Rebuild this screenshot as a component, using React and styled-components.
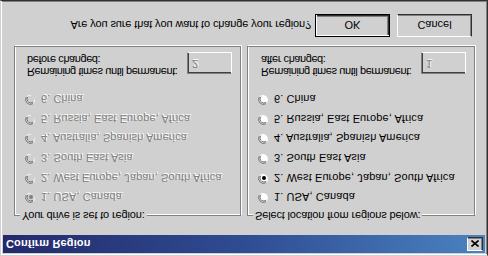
import React from "react";
import styled, { createGlobalStyle, css } from "styled-components";

const Global = createGlobalStyle`
  html, body { margin: 0; padding: 0; background: #d0d0d0; }
  body { font-family: "Liberation Sans", Arial, sans-serif; }
`;

const Window = styled.div`
  width: 488px;
  height: 256px;
  box-sizing: border-box;
  transform: scaleY(-1);
  background: #d0d0d0;
  border: 1px solid;
  border-color: #d0d0d0 #303030 #303030 #d0d0d0;
  box-shadow: inset 1px 1px 0 #ffffff, inset -1px -1px 0 #808080;
  padding: 2px;
  display: flex;
  flex-direction: column;
  font-family: "Liberation Sans", Arial, sans-serif;
  font-size: 11px;
  color: #000;
`;

const TitleBar = styled.div`
  height: 18px;
  flex: none;
  display: flex;
  align-items: center;
  justify-content: space-between;
  padding: 0 2px 0 3px;
  background: linear-gradient(to right, #232a6c 0%, #2f4c92 50%, #4a82c2 100%);
`;

const Title = styled.span`
  color: #fff;
  font-weight: bold;
  font-size: 11px;
  letter-spacing: 0.15px;
`;

const CloseButton = styled.div`
  width: 16px;
  height: 14px;
  box-sizing: border-box;
  background: #d0d0d0;
  border: 1px solid;
  border-color: #fff #303030 #303030 #fff;
  box-shadow: inset -1px -1px 0 #808080;
  display: flex;
  align-items: center;
  justify-content: center;
`;

const Body = styled.div`
  flex: 1;
  display: flex;
  flex-direction: column;
  padding: 19px 10px 0 11px;
`;

const Groups = styled.div`
  display: flex;
  gap: 6px;
`;

const Group = styled.div`
  position: relative;
  width: ${(p) => p.$w}px;
  height: 170px;
  box-sizing: border-box;
  border: 1px solid #808080;
  box-shadow: inset 1px 1px 0 #fff, 1px 1px 0 #fff;
  padding: 8px 8px 0 10px;
  display: flex;
  flex-direction: column;
`;

const Legend = styled.span`
  position: absolute;
  top: -7px;
  left: 5px;
  padding: 0 2px;
  line-height: 13px;
  white-space: nowrap;
  letter-spacing: -0.15px;
  background: #d0d0d0;
`;

const RadioList = styled.div`
  display: flex;
  flex-direction: column;
`;

const disabledText = css`
  color: #808080;
  text-shadow: 1px 1px 0 #fff;
`;

const RadioRow = styled.div`
  height: 19.6px;
  display: flex;
  align-items: center;
  gap: 4px;
  white-space: nowrap;
  letter-spacing: 0.1px;
  span {
    ${(p) => (p.$disabled ? disabledText : "")}
  }
`;

const Bottom = styled.div`
  margin-top: 11px;
  display: flex;
  justify-content: space-between;
  align-items: flex-start;
`;

const Labels = styled.div`
  display: flex;
  flex-direction: column;
  padding-left: ${(p) => p.$pad}px;
  line-height: 12px;
  white-space: nowrap;
  letter-spacing: -0.42px;
`;

const Edit = styled.div`
  flex: none;
  margin-top: 4px;
  width: 45px;
  height: 22px;
  box-sizing: border-box;
  background: #d0d0d0;
  border: 1px solid;
  border-color: #808080 #fff #fff #808080;
  box-shadow: inset 1px 1px 0 #404040, inset -1px -1px 0 #d0d0d0;
  padding: 3px 0 0 4px;
  line-height: 12px;
  ${disabledText}
`;

const ActionRow = styled.div`
  margin-top: 9px;
  display: flex;
  align-items: center;
  justify-content: flex-end;
  padding-right: 3px;
`;

const Question = styled.span`
  margin-right: 4px;
  white-space: nowrap;
  letter-spacing: -0.12px;
`;

const Button = styled.button`
  width: 75px;
  height: 23px;
  box-sizing: border-box;
  margin-left: ${(p) => (p.$first ? 0 : 7)}px;
  padding: 0;
  font-family: inherit;
  font-size: 11px;
  color: #000;
  background: #d0d0d0;
  ${(p) =>
    p.$default
      ? css`
          border: 1px solid #000;
          box-shadow: inset 1px 1px 0 #fff, inset -1px -1px 0 #303030,
            inset -2px -2px 0 #808080;
        `
      : css`
          border: 1px solid;
          border-color: #fff #303030 #303030 #fff;
          box-shadow: inset -1px -1px 0 #808080;
        `}
`;

function Radio({ checked, disabled }) {
  const fill = disabled ? "#d0d0d0" : "#ffffff";
  const dot = disabled ? "#808080" : "#000000";
  return (
    <svg width="12" height="12" viewBox="0 0 12 12" style={{ flex: "none" }}>
      <path d="M1.5 8.5 A5 5 0 0 1 8.5 1.5" stroke="#808080" strokeWidth="1" fill="none" />
      <path d="M8.5 1.5 A5 5 0 0 1 1.5 8.5" stroke="#ffffff" strokeWidth="1" fill="none" />
      <path d="M2.6 8 A4 4 0 0 1 8 2.6" stroke="#404040" strokeWidth="1" fill="none" />
      <path d="M8 2.6 A4 4 0 0 1 2.6 8" stroke="#d0d0d0" strokeWidth="1" fill="none" />
      <circle cx="6" cy="6" r="3.5" fill={fill} />
      {checked && <circle cx="6" cy="6" r="2" fill={dot} />}
    </svg>
  );
}

const regions = [
  "1. USA, Canada",
  "2. West Europe, Japan, South Africa",
  "3. South East Asia",
  "4. Australia, Spanish America",
  "5. Russia, East Europe, Africa",
  "6. China",
];

function RegionGroup({ width, legend, selected, disabled, timesLabel, times, pad }) {
  return (
    <Group $w={width}>
      <Legend>{legend}</Legend>
      <RadioList>
        {regions.map((r, i) => (
          <RadioRow key={r} $disabled={disabled}>
            <Radio checked={i === selected} disabled={disabled} />
            <span>{r}</span>
          </RadioRow>
        ))}
      </RadioList>
      <Bottom>
        <Labels $pad={pad}>
          <span>Remaining times until permanent:</span>
          <span>{timesLabel}</span>
        </Labels>
        <Edit>{times}</Edit>
      </Bottom>
    </Group>
  );
}

export default function App() {
  return (
    <>
      <Global />
      <Window>
        <TitleBar>
          <Title>Confirm Region</Title>
          <CloseButton>
            <svg width="8" height="7" viewBox="0 0 8 7">
              <path d="M0.5 0.5 L7.5 6.5 M7.5 0.5 L0.5 6.5" stroke="#000" strokeWidth="1.6" />
            </svg>
          </CloseButton>
        </TitleBar>
        <Body>
          <Groups>
            <RegionGroup
              width={227}
              legend="Your drive is set to region:"
              selected={0}
              disabled
              timesLabel="before changed:"
              times="2"
              pad={2}
            />
            <RegionGroup
              width={228}
              legend="Select location from regions below:"
              selected={1}
              timesLabel="after changed:"
              times="1"
              pad={3}
            />
          </Groups>
          <ActionRow>
            <Question>Are you sure that you want to change your region?</Question>
            <Button $first $default>OK</Button>
            <Button>Cancel</Button>
          </ActionRow>
        </Body>
      </Window>
    </>
  );
}
